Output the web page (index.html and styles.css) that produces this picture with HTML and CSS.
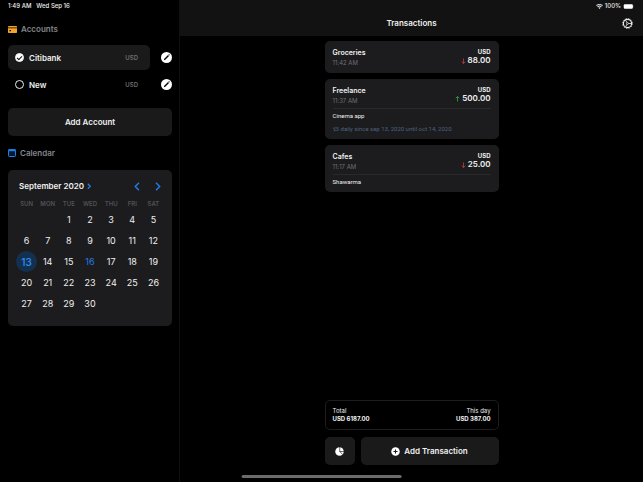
FILE: index.html
```html
<!DOCTYPE html>
<html lang="en">
<head>
<meta charset="utf-8">
<title>Transactions</title>
<link rel="stylesheet" href="styles.css">
</head>
<body>
<div class="app">
  <aside class="sidebar">
    <div class="status"><span>1:49 AM</span><span>Wed Sep 16</span></div>
    <h2 class="section-title">
      <svg class="card-icon" viewBox="0 0 18 14"><path fill="#f5a32b" d="M1.500 0h15A1.500 1.500 0 0 1 18 1.500V3H0V1.500A1.500 1.500 0 0 1 1.500 0zM0 4.500h18v8a1.500 1.500 0 0 1-1.500 1.500h-15A1.500 1.500 0 0 1 0 12.500z"/><rect x="3" y="8" width="3" height="2.500" fill="#000"/></svg>
      Accounts
    </h2>
    <div class="accounts">
      <div class="account">
        <label class="account-label selected"><input type="radio" name="account" checked><span class="account-name">Citibank</span><span class="currency">USD</span></label>
        <button class="edit" aria-label="Edit Citibank"><svg viewBox="0 0 22 22"><circle cx="11" cy="11" r="11" fill="#fff"/><path d="M5.500 16.500l1-3L14 6l2 2-7.500 7.500zM14.800 5.200l1-1 2 2-1 1z" fill="#000"/></svg></button>
      </div>
      <div class="account">
        <label class="account-label"><input type="radio" name="account"><span class="account-name">New</span><span class="currency">USD</span></label>
        <button class="edit" aria-label="Edit New"><svg viewBox="0 0 22 22"><circle cx="11" cy="11" r="11" fill="#fff"/><path d="M5.500 16.500l1-3L14 6l2 2-7.500 7.500zM14.800 5.200l1-1 2 2-1 1z" fill="#000"/></svg></button>
      </div>
    </div>
    <button class="action add-account">Add Account</button>
    <h2 class="section-title">
      <svg class="cal-icon" viewBox="0 0 16 16"><rect x="1" y="1" width="14" height="14" rx="1.500" fill="#06182c" stroke="#1e7fe8" stroke-width="2"/><path d="M1 1h14v3.500H1z" fill="#1e7fe8"/></svg>
      Calendar
    </h2>
    <section class="calendar">
      <div class="calendar-head">
        <button class="month">September 2020<svg class="chev-small" viewBox="0 0 8 12"><path d="M1.500 1.500L6.500 6.500l-5 5"/></svg></button>
        <button class="nav" aria-label="Previous month"><svg viewBox="0 0 10 16"><path d="M8.500 1.500L2 8l6.500 6.500"/></svg></button>
        <button class="nav" aria-label="Next month"><svg viewBox="0 0 10 16"><path d="M1.500 1.500L8 8l-6.500 6.500"/></svg></button>
      </div>
      <table class="days">
        <thead><tr><th>SUN</th><th>MON</th><th>TUE</th><th>WED</th><th>THU</th><th>FRI</th><th>SAT</th></tr></thead>
        <tbody>
          <tr><td></td><td></td><td><button>1</button></td><td><button>2</button></td><td><button>3</button></td><td><button>4</button></td><td><button>5</button></td></tr>
          <tr><td><button>6</button></td><td><button>7</button></td><td><button>8</button></td><td><button>9</button></td><td><button>10</button></td><td><button>11</button></td><td><button>12</button></td></tr>
          <tr><td><button class="picked">13</button></td><td><button>14</button></td><td><button>15</button></td><td><button class="today">16</button></td><td><button>17</button></td><td><button>18</button></td><td><button>19</button></td></tr>
          <tr><td><button>20</button></td><td><button>21</button></td><td><button>22</button></td><td><button>23</button></td><td><button>24</button></td><td><button>25</button></td><td><button>26</button></td></tr>
          <tr><td><button>27</button></td><td><button>28</button></td><td><button>29</button></td><td><button>30</button></td><td></td><td></td><td></td></tr>
        </tbody>
      </table>
    </section>
  </aside>
  <main class="main">
    <header class="header">
      <div class="status status-right">
        <svg class="wifi" viewBox="0 0 14 10"><path fill="#eee" d="M7 10L4.800 7.600a3.200 3.200 0 0 1 4.400 0zM3.900 6.600L2.500 5.100a6.500 6.500 0 0 1 9 0l-1.400 1.500a4.500 4.500 0 0 0-6.200 0zM1.700 4.200L.2 2.600a9.900 9.900 0 0 1 13.600 0l-1.500 1.600a7.700 7.700 0 0 0-10.600 0z"/></svg>
        <span>100%</span>
        <svg class="battery" viewBox="0 0 24 11"><rect x=".5" y=".5" width="20" height="10" rx="2.500" fill="#fff"/><path d="M22 3.500q2 2 0 4z" fill="#aaa"/></svg>
      </div>
      <div class="title-bar">
        <h1>Transactions</h1>
        <button class="settings" aria-label="Settings"><svg viewBox="0 0 24 24" fill="none" stroke="#eee"><circle cx="12" cy="12" r="9" stroke-width="2.500"/><circle cx="12" cy="12" r="11" stroke-width="1.500" stroke-dasharray="2.900 2.860"/><path d="M12 12h8M12 12L8 5M12 12l-4 7" stroke-width="1.800"/><circle cx="12" cy="12" r="2" fill="#121212" stroke-width="1.500"/></svg></button>
      </div>
    </header>
    <div class="content">
      <div class="transactions">
        <article class="card">
          <div class="row"><div><h3>Groceries</h3><p class="time">11:42 AM</p></div>
          <div class="amount"><span class="unit">USD</span><span class="value"><svg class="arrow down" viewBox="0 0 10 12"><path d="M5 1v10M1.500 7.500L5 11l3.500-3.500"/></svg>88.00</span></div></div>
        </article>
        <article class="card">
          <div class="row"><div><h3>Freelance</h3><p class="time">11:37 AM</p></div>
          <div class="amount"><span class="unit">USD</span><span class="value"><svg class="arrow up" viewBox="0 0 10 12"><path d="M5 11V1M1.500 4.500L5 1l3.500 3.500"/></svg>500.00</span></div></div>
          <p class="note">Cinema app</p>
          <p class="repeat"><svg viewBox="0 0 14 12"><path d="M1 6V3.500h11M9.500 1L12 3.500 9.500 6M13 6v3H2M4.500 6.500L2 9l2.500 2.500"/></svg>daily since sep 13, 2020 until oct 14, 2020</p>
        </article>
        <article class="card">
          <div class="row"><div><h3>Cafes</h3><p class="time">11:17 AM</p></div>
          <div class="amount"><span class="unit">USD</span><span class="value"><svg class="arrow down" viewBox="0 0 10 12"><path d="M5 1v10M1.500 7.500L5 11l3.500-3.500"/></svg>25.00</span></div></div>
          <p class="note">Shawarma</p>
        </article>
      </div>
      <footer class="footer">
        <div class="totals">
          <div><span>Total</span><strong>USD 6187.00</strong></div>
          <div class="this-day"><span>This day</span><strong>USD 387.00</strong></div>
        </div>
        <div class="actions">
          <button class="action stats" aria-label="Statistics"><svg viewBox="0 0 18 18"><circle cx="9" cy="9" r="8.500" fill="#fff"/><path d="M9.500 0v9l6 6M9.500 9H18" fill="none" stroke="#1a1a1b" stroke-width="1.300"/></svg></button>
          <button class="action add-transaction"><svg viewBox="0 0 18 18"><circle cx="9" cy="9" r="8.500" fill="#fff"/><path d="M9 5v8M5 9h8" stroke="#1a1a1b" stroke-width="2"/></svg>Add Transaction</button>
        </div>
      </footer>
    </div>
  </main>
  <div class="home-indicator"></div>
</div>
</body>
</html>
```
FILE: styles.css
```css
* { box-sizing: border-box; }
body {
  margin: 0;
  background: #000;
  color: #f0f0f0;
  font: 8px/10px Inter, "Liberation Sans", sans-serif;
}
h1, h2, h3, p { margin: 0; font-size: inherit; font-weight: 600; }
button { margin: 0; padding: 0; border: 0; background: none; color: inherit; font: inherit; cursor: pointer; }
svg { display: block; flex: none; }

.app { display: flex; min-height: 100vh; position: relative; }
.sidebar { width: 28%; padding: 0 7px 0 8px; border-right: 1px solid #101012; }
.main { flex: 1; display: flex; flex-direction: column; }

.status { display: flex; gap: 5px; height: 12px; align-items: center; font-size: 6px; font-weight: 500; }
.section-title { display: flex; align-items: center; gap: 4px; height: 10px; color: #85858a; }
.status + .section-title { margin-top: 12px; }
.card-icon { width: 9px; height: 7px; }
.cal-icon { width: 8px; height: 8px; }

.accounts { display: flex; flex-direction: column; gap: 2px; margin-top: 11px; }
.account { display: flex; align-items: center; justify-content: space-between; }
.account-label { display: flex; align-items: center; width: 142px; height: 25px; padding: 0 12px 0 7px; border-radius: 5px; font-weight: 600; }
.selected { background: #1a1a1b; }
.account-name { flex: 1; margin-left: 5px; }
.currency { color: #6e6e73; font-size: 6px; }
.account input { appearance: none; width: 9px; height: 9px; margin: 0; border: 1px solid #eee; border-radius: 50%; }
.account input:checked { display: grid; place-items: center; background: #fff; }
.account input:checked::before { content: ""; width: 4px; height: 2px; border: solid #111; border-width: 0 0 1px 1px; transform: rotate(-45deg); }
.edit svg { width: 11px; height: 11px; }

.action { display: flex; align-items: center; justify-content: center; height: 28px; border-radius: 5px; background: #1a1a1b; font-weight: 600; }
.add-account { width: 100%; margin: 11px 0 12px; }

.calendar { margin-top: 12px; padding: 8px 8px 12px; border-radius: 5px; background: #1c1c1e; }
.calendar-head { display: flex; align-items: center; height: 16px; padding: 0 3px; }
.calendar-head path { fill: none; stroke: #1e7fe8; stroke-width: 2.5; }
.month { display: flex; align-items: center; gap: 3px; margin-right: auto; font-weight: 600; }
.chev-small { width: 4px; height: 6px; }
.nav { margin-left: 15px; }
.nav svg { width: 6px; height: 9px; }
.days { width: 100%; table-layout: fixed; border-collapse: collapse; }
.days th { height: 15px; padding: 5px 0 0; color: #515155; font-size: 6px; line-height: 10px; font-weight: 600; }
.days td { height: 21px; padding: 0; text-align: center; }
.days button { width: 21px; height: 21px; border-radius: 50%; font-size: 9px; vertical-align: top; }
.days .today { color: #1e7fe8; }
.days .picked { background: #14304f; color: #2b87ee; font-size: 10px; font-weight: 600; }

.header { height: 36px; background: #121212; }
.status-right { justify-content: flex-end; gap: 2px; padding-right: 8px; }
.wifi { width: 7px; height: 5px; }
.battery { width: 12px; height: 5px; }
.title-bar { display: grid; grid-template-columns: 1fr auto 1fr; align-items: center; height: 22px; padding: 0 10px; }
.title-bar h1 { grid-column: 2; }
.settings { justify-self: end; }
.settings svg { width: 11px; height: 11px; }

.content { flex: 1; display: flex; flex-direction: column; align-items: center; justify-content: space-between; padding: 5px 0 17px; }
.transactions, .footer { width: 174px; }
.transactions { display: flex; flex-direction: column; gap: 6px; }
.card { padding: 6px 8px; border-radius: 5px; background: #1c1c1e; }
.row { display: flex; justify-content: space-between; }
h3 { font-size: 7px; line-height: 11px; }
.time { color: #6f6f74; font-size: 6px; line-height: 9px; font-weight: 400; }
.amount { display: flex; flex-direction: column; align-items: flex-end; font-weight: 600; }
.unit { font-size: 6px; line-height: 9px; font-weight: 700; }
.value { display: flex; align-items: center; gap: 2px; line-height: 9px; }
.arrow { width: 5px; height: 6px; fill: none; stroke-width: 1.5; }
.down { stroke: #d63d35; }
.up { stroke: #2fae56; }
.note, .repeat { font-family: Roboto, "Liberation Sans", sans-serif; font-size: 6px; line-height: 9px; font-weight: 400; }
.note { margin-top: 3px; padding-top: 2px; border-top: 1px solid #29292b; }
.repeat { display: flex; align-items: center; gap: 2px; margin-top: 4px; color: #4a6480; }
.repeat svg { width: 6px; height: 6px; fill: none; stroke: #4a6480; stroke-width: 1.5; }

.totals { display: flex; justify-content: space-between; padding: 6px 7px; border: 1px solid #1d1d1f; border-radius: 5px; font-size: 6px; line-height: 8px; }
.totals span, .totals strong { display: block; }
.totals strong { font-weight: 700; }
.this-day { text-align: right; }
.actions { display: flex; gap: 6px; margin-top: 7px; }
.stats { width: 30px; }
.stats svg, .add-transaction svg { width: 9px; height: 9px; }
.add-transaction { flex: 1; gap: 4px; }

.home-indicator { position: absolute; bottom: 4px; left: 50%; width: 25%; height: 3px; border-radius: 2px; background: #6b6b6b; transform: translateX(-50%); }
```
